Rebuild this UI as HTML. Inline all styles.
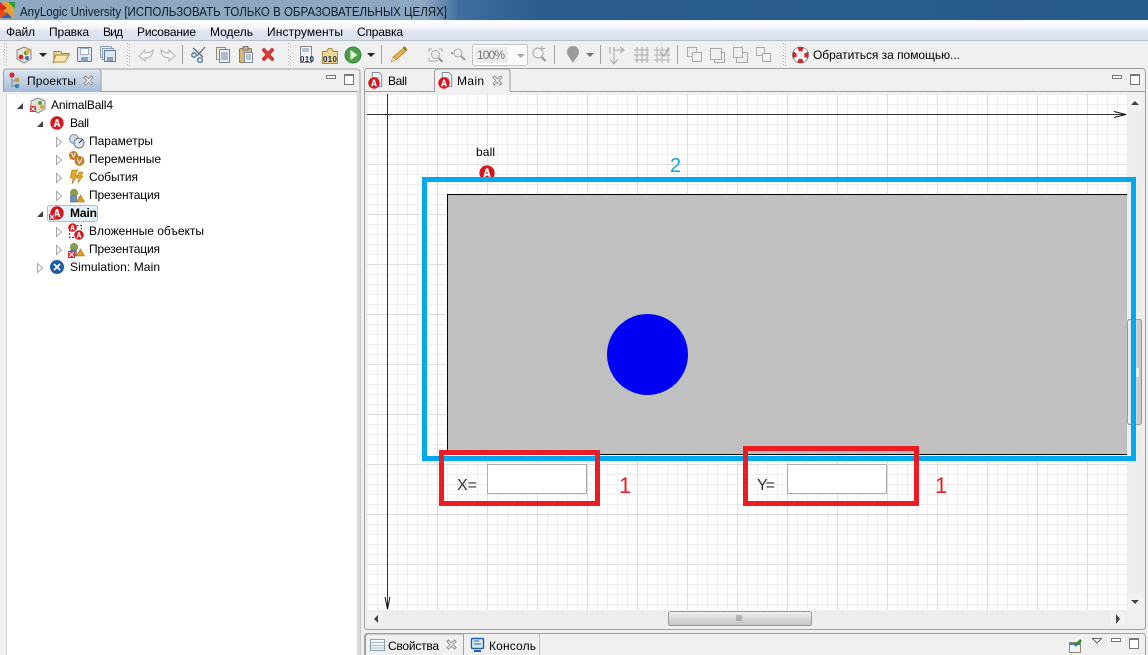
<!DOCTYPE html>
<html><head><meta charset="utf-8"><style>
html,body{margin:0;padding:0;background:#f0f0f0;overflow:hidden}
svg{display:block}
text{font-family:"Liberation Sans",sans-serif;font-size:12px;fill:#000}
</style></head><body>
<svg width="1148" height="655" viewBox="0 0 1148 655" xmlns="http://www.w3.org/2000/svg">
<defs>
<linearGradient id="tb" x1="0" x2="1" y1="0" y2="0"><stop offset="0" stop-color="#8fa8c2"/><stop offset=".37" stop-color="#8fa8c2"/><stop offset=".4" stop-color="#3f6e9e"/><stop offset=".47" stop-color="#2a5c90"/><stop offset="1" stop-color="#275a8c"/></linearGradient>
<linearGradient id="mb" x1="0" x2="0" y1="0" y2="1"><stop offset="0" stop-color="#ffffff"/><stop offset=".35" stop-color="#f4f6fb"/><stop offset=".5" stop-color="#dfe4f2"/><stop offset="1" stop-color="#dbe1f0"/></linearGradient>
<linearGradient id="at" x1="0" x2="0" y1="0" y2="1"><stop offset="0" stop-color="#dde7f2"/><stop offset="1" stop-color="#a3bcd8"/></linearGradient>
<linearGradient id="sb" x1="0" x2="1" y1="0" y2="0"><stop offset="0" stop-color="#efefef"/><stop offset=".5" stop-color="#d8d8d8"/><stop offset="1" stop-color="#c4c4c4"/></linearGradient>
<linearGradient id="sh" x1="0" x2="0" y1="0" y2="1"><stop offset="0" stop-color="#f2f2f2"/><stop offset=".5" stop-color="#d8d8d8"/><stop offset="1" stop-color="#c4c4c4"/></linearGradient>
<pattern id="minor" width="10" height="10" patternUnits="userSpaceOnUse" x="367" y="94"><rect width="10" height="10" fill="#fff"/><rect width="1" height="10" fill="#efefef"/><rect width="10" height="1" fill="#efefef"/></pattern>
<pattern id="major" width="50" height="50" patternUnits="userSpaceOnUse" x="387" y="64"><rect width="1" height="50" fill="#dedede"/><rect width="50" height="1" fill="#dedede"/></pattern>
<symbol id="A" viewBox="0 0 14 14" overflow="visible"><circle cx="7" cy="7" r="6.7" fill="#d7171f"/><path d="M3.6 11 6 3h2l2.4 8H8.6L8.2 9.3H5.8L5.4 11zM6.2 7.8h1.6L7 4.8z" fill="#fff"/></symbol>
<symbol id="X" viewBox="0 0 6 6" overflow="visible"><rect width="6" height="6" fill="#d8262c"/><path d="M1 1l4 4M5 1L1 5" stroke="#fff" stroke-width="1"/></symbol>
<symbol id="gr" viewBox="0 0 4 24" overflow="visible"><g fill="#bbb"><rect x="0" y="0" width="1" height="1"/><rect x="2" y="1" width="1" height="1"/><rect x="0" y="3" width="1" height="1"/><rect x="2" y="4" width="1" height="1"/><rect x="0" y="6" width="1" height="1"/><rect x="2" y="7" width="1" height="1"/><rect x="0" y="9" width="1" height="1"/><rect x="2" y="10" width="1" height="1"/><rect x="0" y="12" width="1" height="1"/><rect x="2" y="13" width="1" height="1"/><rect x="0" y="15" width="1" height="1"/><rect x="2" y="16" width="1" height="1"/><rect x="0" y="18" width="1" height="1"/><rect x="2" y="19" width="1" height="1"/><rect x="0" y="21" width="1" height="1"/><rect x="2" y="22" width="1" height="1"/></g></symbol>
<symbol id="doc" viewBox="0 0 16 16" overflow="visible"><path d="M3.5 .5h7l3 3v12h-10z" fill="#f5f7fa" stroke="#7d8ba0"/><path d="M5 6h6M5 8h6" stroke="#9db0c8"/></symbol>
<symbol id="pres" viewBox="0 0 16 14" overflow="visible"><circle cx="5" cy="4" r="3.6" fill="#8aa24b" stroke="#5b7030" stroke-width=".6"/><rect x="1.5" y="7" width="6" height="6" fill="#6f93bd" stroke="#3f5f88" stroke-width=".6"/><path d="M7.5 13l4-7 4 7z" fill="#e19a1c" stroke="#a86c10" stroke-width=".6"/></symbol>
<symbol id="tw" viewBox="0 0 8 8" overflow="visible"><path d="M7 1v6H1z" fill="#404040"/></symbol>
<symbol id="tc" viewBox="0 0 8 10" overflow="visible"><path d="M1.5 .5l5 4.5-5 4.5z" fill="#fff" stroke="#a8a8a8"/></symbol>
<symbol id="cl" viewBox="0 0 11 11" overflow="visible"><path d="M1 2.5 2.5 1 5.5 4 8.500 1 10 2.500 7 5.500 10 8.500 8.500 10 5.500 7 2.500 10 1 8.500 4 5.500z" fill="#fff" stroke="#8a8a8a" stroke-width=".9"/></symbol>
<symbol id="sq" viewBox="0 0 15 15" overflow="visible"><rect x=".5" y=".5" width="9" height="9" fill="#f0f0f0" stroke="#aaa"/><rect x="5.500" y="5.500" width="9" height="9" fill="#f0f0f0" stroke="#aaa"/></symbol>
</defs>

<rect width="1148" height="655" fill="#f0f0f0"/>
<!-- title -->
<rect width="1148" height="21" fill="url(#tb)"/>
<rect y="20" width="1148" height="1" fill="#f4f7fa"/>
<rect x="3" y="2" width="11" height="16" fill="#e8a32c"/><path d="M0 2l7 6-7 5z" fill="#d92a20"/><path d="M8 2h7v7z" fill="#2aa04a"/><path d="M1 18l6-6 5 6z" fill="#2f63b5"/><path d="M0 9l8 5-8 4z" fill="#e44c1e"/>
<text x="20" y="16" font-size="13" textLength="427" lengthAdjust="spacingAndGlyphs" style="font-size:13px;fill:#101c28">AnyLogic University [ИСПОЛЬЗОВАТЬ ТОЛЬКО В ОБРАЗОВАТЕЛЬНЫХ ЦЕЛЯХ]</text>
<!-- menu -->
<rect y="21" width="1148" height="20" fill="url(#mb)"/>
<rect y="40" width="1148" height="1" fill="#b8bfcc"/>
<text x="6" y="36" textLength="29">Файл</text><text x="49" y="36" textLength="40">Правка</text><text x="103" y="36" textLength="20">Вид</text><text x="137" y="36" textLength="59">Рисование</text><text x="210" y="36" textLength="43">Модель</text><text x="267" y="36" textLength="76">Инструменты</text><text x="357" y="36" textLength="46">Справка</text>

<!-- toolbar -->
<use href="#gr" x="4" y="43" width="4" height="24"/><use href="#gr" x="127" y="43" width="4" height="24"/><use href="#gr" x="288" y="43" width="4" height="24"/><use href="#gr" x="783" y="43" width="4" height="24"/>
<g>
<path d="M24 47l7 3v9l-7 4-7-4v-9z" fill="#e4e2da" stroke="#8a8a80"/><circle cx="21" cy="57" r="2.400" fill="#d8262c"/><circle cx="26" cy="53" r="2.200" fill="#58a23a"/><circle cx="27" cy="58" r="2" fill="#3b6fb8"/><path d="M27 47l1 2 2-1-1 2 2 1-2 1 1 2-2-1-1 2-1-2" fill="#e8b030"/>
<path d="M39 53h8l-4 4z" fill="#222"/>
<path d="M54 51.500h7l1 2h7v2h-11l-4 7z" fill="#f1d58a" stroke="#9a8450"/><path d="M56 55h13l-4 7H53z" fill="#fbe7ad" stroke="#a58a4a"/>
<rect x="77.500" y="47.500" width="14" height="14" rx="1" fill="#dfe7f2" stroke="#5b7ca6"/><rect x="80.500" y="48.500" width="8" height="6" fill="#fff" stroke="#9cb0c8"/><rect x="81" y="57" width="7" height="4.500" fill="#8aa0ba"/>
<rect x="100.500" y="46.500" width="11" height="11" fill="#e6ebf2" stroke="#8ea0b6"/><rect x="102.500" y="48.500" width="11" height="11" fill="#e6ebf2" stroke="#8ea0b6"/><rect x="104.500" y="50.500" width="11" height="11" fill="#dfe7f2" stroke="#5b7ca6"/><rect x="107" y="57" width="6" height="4" fill="#8aa0ba"/>
<path d="M139 56l6-6v3c3 0 6-1 8-3 0 5-3 8-8 8v3z" fill="#f4f4f4" stroke="#b4b4b4"/>
<path d="M175 56l-6-6v3c-3 0-6-1-8-3 0 5 3 8 8 8v3z" fill="#f4f4f4" stroke="#b4b4b4"/>
<rect x="182" y="45" width="1" height="19" fill="#a0a0a0"/>
<path d="M205 47l-8 9M193 48l10 9" stroke="#5a6a7a" stroke-width="1.300" fill="none"/><circle cx="194" cy="55" r="2.200" fill="none" stroke="#3a6ea5" stroke-width="1.300"/><circle cx="200" cy="60" r="2.400" fill="none" stroke="#3a6ea5" stroke-width="1.300"/>
<rect x="216.500" y="47.500" width="9" height="12" fill="#f6f1df" stroke="#8c8c80"/><rect x="219.500" y="49.500" width="10" height="13" fill="#eef2f8" stroke="#6f86a4"/><path d="M221 53h7M221 55h7M221 57h7M221 59h7" stroke="#6f86a4"/>
<rect x="239.500" y="48.500" width="12" height="14" rx="1" fill="#dbb878" stroke="#96774a"/><rect x="243" y="46.500" width="5" height="3.500" fill="#bbb" stroke="#777"/><rect x="244.500" y="52.500" width="8" height="10" fill="#f5f7fb" stroke="#7a8ca4"/><path d="M246 55h5M246 57h5M246 59h5" stroke="#7a8ca4"/>
<path d="M262 50l2-2 4 4 4-4 2 2-4 4.500 4 4.500-2 2-4-4-4 4-2-2 4-4.500z" fill="#dc3a3a" stroke="#c02020" stroke-width=".6"/>
<rect x="300.500" y="46.500" width="11" height="16" fill="#f3f4f6" stroke="#888"/><path d="M302 49h7M302 51h7" stroke="#7791b3"/><text x="300" y="62" style="font-size:8px;font-weight:bold;fill:#17305a" textLength="14">010</text>
<path d="M322.500 51.500h4l2-3 3 0 2 3h4v12h-15z" fill="#f2d88f" stroke="#a88a4a"/><text x="323" y="62" style="font-size:8px;font-weight:bold;fill:#17305a" textLength="14">010</text>
<circle cx="353" cy="55" r="7.500" fill="#fff" stroke="#3e8c3e" stroke-width="2"/><circle cx="353" cy="55" r="6.500" fill="#4a9c46"/><path d="M350.500 50l7 5-7 5z" fill="#e2f3d8"/>
<path d="M367 53h8l-4 4z" fill="#222"/>
<rect x="381" y="45" width="1" height="19" fill="#a0a0a0"/>
<path d="M405 47l2 3-11 10-3-3z" fill="#e8b040" stroke="#a87e20" stroke-width=".7"/><path d="M393 57l3 3-5 2z" fill="#f6e9c8" stroke="#a89868" stroke-width=".6"/><path d="M403 47l3 3" stroke="#8a6a20" stroke-width="1.500"/>
<!-- disabled -->
<path d="M429 49h3M429 49v3M442 49h-3M442 49v3M429 61h3M429 61v-3M438 61h-6" stroke="#aaa" fill="none"/><circle cx="435.500" cy="54.500" r="4" fill="#eee" stroke="#aaa"/><path d="M438.500 58l4 4" stroke="#999" stroke-width="2"/>
<circle cx="458" cy="53" r="4" fill="#eee" stroke="#aaa"/><path d="M453 53h-2M461 56l4 4" stroke="#999" stroke-width="2"/>
<rect x="472.500" y="44.500" width="55" height="21" rx="2" fill="#fbfbfb" stroke="#c4c4c4"/><rect x="475" y="47" width="33" height="16" fill="#ececec"/><text x="477" y="59" style="font-size:12px;fill:#777" textLength="28">100%</text><path d="M517 54h8l-4 4z" fill="#aaa"/>
<circle cx="538" cy="53" r="5" fill="#f4f4f4" stroke="#aaa"/><path d="M541.500 57l4 4" stroke="#999" stroke-width="2"/><path d="M542 46v5M540 48.500h5" stroke="#aaa"/>
<rect x="554" y="45" width="1" height="19" fill="#a0a0a0"/>
<path d="M573 46c4 0 6 3 6 6 0 4-4 7-6 11-2-4-6-7-6-11 0-3 2-6 6-6z" fill="#9a9a9a"/>
<path d="M586 53h8l-4 4z" fill="#707070"/>
<rect x="600" y="45" width="1" height="19" fill="#a0a0a0"/>
<path d="M614 47v17M610 59l4 5 4-5M614 50h9M620 47l4 3-4 3M610 47v7" stroke="#a4a4a4" fill="none"/>
<path d="M637 47v16M642 47v16M647 47v16M634 50h15M634 55h15M634 60h15" stroke="#a8a8a8" fill="none"/>
<path d="M657 47v16M662 47v16M668 47v16M654 50h16M654 55h16M654 60h16" stroke="#b4b4b4" fill="none"/><path d="M660 52l4 4 5-8" stroke="#999" fill="none"/>
<rect x="677" y="45" width="1" height="19" fill="#a0a0a0"/>
<use href="#sq" x="687" y="47" width="15" height="15"/>
<rect x="710.500" y="48.500" width="11" height="11" fill="#f0f0f0" stroke="#aaa"/><path d="M721.500 52.500h3v10h-10v-3" fill="none" stroke="#aaa"/>
<rect x="736.500" y="52.500" width="11" height="10" fill="#f0f0f0" stroke="#aaa"/><rect x="733.500" y="47.500" width="9" height="10" fill="#f0f0f0" stroke="#aaa"/>
<rect x="756.500" y="47.500" width="8" height="8" fill="#f0f0f0" stroke="#aaa"/><rect x="762.500" y="53.500" width="8" height="8" fill="#f0f0f0" stroke="#aaa"/>
<circle cx="800.500" cy="55" r="6" fill="none" stroke="#fff" stroke-width="4"/><circle cx="800.500" cy="55" r="6" fill="none" stroke="#d8262c" stroke-width="4" stroke-dasharray="5 4.400" stroke-dashoffset="2.500"/><circle cx="800.500" cy="55" r="8" fill="none" stroke="#555" stroke-width=".6"/>
<text x="813" y="59" textLength="147">Обратиться за помощью...</text>
</g>

<!-- left pane -->
<path d="M3.500 92V72a3 3 0 0 1 3-3H357a3 3 0 0 1 3 3V655" fill="#f0f0f0" stroke="#a0a0a0"/>
<path d="M3.500 92V72a3 3 0 0 1 3-3H98a3 3 0 0 1 3 3v20z" fill="url(#at)"/><path d="M3.500 92V72a3 3 0 0 1 3-3H98a3 3 0 0 1 3 3V91.500H358" fill="none" stroke="#a0a0a0"/>
<rect x="6" y="94" width="1" height="561" fill="#d0d0d0"/>
<rect x="7" y="95" width="350" height="560" fill="#fff"/>
<rect x="357" y="92" width="3" height="563" fill="#d6dae0"/>
<circle cx="12" cy="75" r="2.600" fill="#d8262c"/><path d="M12 78v9M12 81h3M12 86h3" stroke="#888"/><circle cx="17" cy="80" r="2.300" fill="#d09a3a"/><circle cx="17" cy="86" r="2.300" fill="#3f7fa8"/>
<text x="27" y="85" textLength="49">Проекты</text>
<use href="#cl" x="83" y="75" width="11" height="11"/>
<rect x="326.500" y="75.500" width="9" height="3" fill="#fff" stroke="#777"/><rect x="344.500" y="74.500" width="9" height="10" fill="#fff" stroke="#777"/><rect x="344" y="74" width="10" height="2" fill="#777"/>

<!-- tree -->
<g>
<use href="#tw" x="16" y="102" width="8" height="8"/>
<path d="M38 98l7 3v8l-7 4-7-4v-8z" fill="#e4e2da" stroke="#8a8a80"/><circle cx="40" cy="103" r="2" fill="#58a23a"/><circle cx="42" cy="107" r="2" fill="#d8a020"/><use href="#X" x="30" y="106" width="6" height="6"/>
<text x="51" y="109" textLength="62">AnimalBall4</text>
<use href="#tw" x="36" y="120" width="8" height="8"/><use href="#A" x="50" y="116" width="14" height="14"/><text x="70" y="127" textLength="19">Ball</text>
<use href="#tc" x="55" y="137" width="8" height="10"/>
<circle cx="74" cy="139" r="4.500" fill="#cfdbe8" stroke="#7c8ca0"/><circle cx="79" cy="143" r="5" fill="#dfe6ee" stroke="#6a7a90"/><path d="M79 143l4-4" stroke="#333"/>
<text x="89" y="145" textLength="64">Параметры</text>
<use href="#tc" x="55" y="155" width="8" height="10"/>
<circle cx="73.500" cy="155.500" r="4.500" fill="#cc7a24"/><circle cx="79.500" cy="161" r="5" fill="#cc7a24"/><path d="M71.500 153l2 4 2-4M77 158.500l2.500 5 2.500-5" stroke="#fff" fill="none"/>
<text x="89" y="163" textLength="72">Переменные</text>
<use href="#tc" x="55" y="173" width="8" height="10"/>
<path d="M72 170h6l-3 5h3l-6 9 1-6h-3zM79 172h4l-2 4h2l-5 7 1-5h-2z" fill="#e6a81c" stroke="#a06c10" stroke-width=".5"/>
<text x="89" y="181" textLength="49">События</text>
<use href="#tc" x="55" y="191" width="8" height="10"/><use href="#pres" x="69" y="189" width="16" height="14"/>
<text x="89" y="199" textLength="71">Презентация</text>
<use href="#tw" x="36" y="210" width="8" height="8"/>
<rect x="47.500" y="205.500" width="50" height="16" rx="2" fill="#e6f2fb" stroke="#99c4e6"/>
<use href="#A" x="50" y="206" width="14" height="14"/><use href="#X" x="49" y="214" width="6" height="6"/>
<text x="70" y="217" textLength="27" font-weight="bold" style="font-weight:bold">Main</text>
<use href="#tc" x="55" y="227" width="8" height="10"/>
<rect x="69.500" y="225.500" width="12" height="12" fill="none" stroke="#444" stroke-dasharray="2 1.500"/>
<use href="#A" x="68" y="223" width="9" height="9"/><use href="#A" x="74" y="230" width="10" height="10"/>
<text x="89" y="235" textLength="115">Вложенные объекты</text>
<use href="#tc" x="55" y="245" width="8" height="10"/><use href="#pres" x="69" y="243" width="16" height="14"/><use href="#X" x="68" y="251" width="7" height="7"/>
<text x="89" y="253" textLength="71">Презентация</text>
<use href="#tc" x="36" y="263" width="8" height="10"/>
<circle cx="57" cy="267" r="7" fill="#1e5aa8"/><path d="M54 264l6 6M60 264l-6 6" stroke="#fff" stroke-width="1.800"/>
<text x="70" y="271" textLength="90">Simulation: Main</text>
</g>

<!-- right pane -->
<rect x="364.500" y="68.500" width="781" height="561" rx="3" fill="#f0f0f0" stroke="#a0a0a0"/>
<rect x="365" y="91" width="780" height="1" fill="#a0a0a0"/>
<path d="M434.500 91.500V72a3 3 0 0 1 3-3H507a3 3 0 0 1 3 3V91.500" fill="#f0f0f0" stroke="#a0a0a0"/><rect x="435" y="91" width="75" height="1" fill="#f0f0f0"/>
<use href="#doc" x="369" y="72" width="15" height="15"/><use href="#A" x="368" y="77" width="12" height="12"/><text x="388" y="85" textLength="19">Ball</text>
<use href="#doc" x="439" y="72" width="15" height="15"/><use href="#A" x="438" y="77" width="12" height="12"/><text x="457" y="85" textLength="27">Main</text>
<use href="#cl" x="492" y="75" width="11" height="11"/>
<rect x="1112.500" y="75.500" width="9" height="3" fill="#fff" stroke="#777"/><rect x="1130.500" y="74.500" width="9" height="10" fill="#fff" stroke="#777"/><rect x="1130" y="74" width="10" height="2" fill="#777"/>

<!-- canvas -->
<rect x="367" y="94" width="760" height="516" fill="url(#minor)"/>
<rect x="367" y="94" width="760" height="516" fill="url(#major)"/>
<rect x="367" y="114" width="759" height="1" fill="#333"/><path d="M1114 111.500l12 3-12 3" fill="none" stroke="#111"/>
<rect x="387" y="94" width="1" height="514" fill="#333"/><path d="M385 597l2.500 12 2.500-12" fill="none" stroke="#111"/>
<text x="476" y="156" textLength="19">ball</text>
<use href="#A" x="479" y="165" width="16" height="16"/>
<rect x="447" y="194" width="680" height="261" fill="#c0c0c0"/>
<rect x="447" y="194" width="680" height="1" fill="#000"/><rect x="447" y="194" width="1" height="261" fill="#000"/><rect x="447" y="454" width="680" height="1" fill="#000"/>
<circle cx="647.500" cy="354.500" r="40.500" fill="#0000f5"/>
<rect x="487.500" y="464.500" width="99" height="29" fill="#fff" stroke="#acacb4"/>
<rect x="787.500" y="464.500" width="99" height="29" fill="#fff" stroke="#acacb4"/>
<text x="457" y="490" style="font-size:16px;fill:#333" textLength="20">X=</text>
<text x="757" y="490" style="font-size:16px;fill:#333" textLength="18">Y=</text>

<!-- scrollbars -->
<rect x="1127" y="95" width="16" height="515" fill="#ededed"/>
<rect x="1128" y="95" width="14" height="16" fill="#f2f2f2"/><path d="M1131 105l4-4 4 4z" fill="#444"/>
<rect x="1128" y="594" width="14" height="15" fill="#f2f2f2"/><path d="M1131 600l4 4 4-4z" fill="#444"/>
<rect x="1127.500" y="319.500" width="14" height="105" rx="2" fill="url(#sb)" stroke="#9a9a9a"/>
<rect x="367" y="611" width="760" height="16" fill="#ededed"/>
<rect x="368" y="612" width="15" height="14" fill="#f2f2f2"/><path d="M378 615l-4 4 4 4z" fill="#444"/>
<rect x="1110" y="612" width="15" height="14" fill="#f2f2f2"/><path d="M1116 614l4 5-4 5z" fill="#444"/>
<rect x="668.500" y="611.500" width="143" height="14" rx="2" fill="url(#sh)" stroke="#9a9a9a"/>
<path d="M737 615v6M739 615v6M741 615v6" stroke="#888"/>

<!-- annotations -->
<rect x="424.500" y="179.500" width="709" height="279" fill="none" stroke="#00a8ec" stroke-width="5"/>
<rect x="1136" y="368" width="3" height="9" fill="#eee"/>
<rect x="441.500" y="452.500" width="156" height="51" fill="none" stroke="#ed1c24" stroke-width="5"/>
<rect x="745.500" y="448.500" width="171" height="55" fill="none" stroke="#ed1c24" stroke-width="5"/>
<text x="670" y="172" style="font-size:20px;fill:#12a5e6">2</text>
<text x="619" y="493" style="font-size:22px;fill:#ed1c24">1</text>
<text x="935" y="493" style="font-size:22px;fill:#ed1c24">1</text>

<!-- bottom pane -->
<rect x="364.500" y="633.500" width="781" height="40" rx="3" fill="#f0f0f0" stroke="#a0a0a0"/>
<path d="M365.500 655V637a3 3 0 0 1 3-3H463.500V655" fill="#f0f0f0" stroke="#a0a0a0"/>
<path d="M539.500 634v21" stroke="#c0c0c0"/>
<rect x="370.500" y="639.500" width="14" height="11" fill="#f4f7fb" stroke="#8ea0b6"/><path d="M371 642.500h13M371 645.500h13M371 648h13" stroke="#a8b8cc"/>
<text x="388" y="650" textLength="51">Свойства</text>
<use href="#cl" x="446" y="639" width="11" height="11"/>
<rect x="471.500" y="638.500" width="12" height="10" rx="1" fill="#dfeaf6" stroke="#1f5ea8" stroke-width="1.400"/><path d="M474 641h5M474 644h7" stroke="#1f5ea8"/><rect x="474" y="650" width="7" height="2" fill="#1f5ea8"/>
<text x="489" y="650" textLength="47">Консоль</text>
<rect x="1069.500" y="642.500" width="11" height="10" fill="#eef3f8" stroke="#8a8a70"/><rect x="1070" y="643" width="10" height="2" fill="#3a78c0"/><path d="M1075 646l6-6" stroke="#2a8a2a" stroke-width="2.400"/>
<path d="M1092.500 638.500h9l-4.500 4.500z" fill="#fff" stroke="#666"/>
<rect x="1111.500" y="638.500" width="9" height="3" fill="#fff" stroke="#777"/><rect x="1129.500" y="638.500" width="9" height="10" fill="#fff" stroke="#777"/><rect x="1129" y="638" width="10" height="2" fill="#777"/>
</svg>
</body></html>
